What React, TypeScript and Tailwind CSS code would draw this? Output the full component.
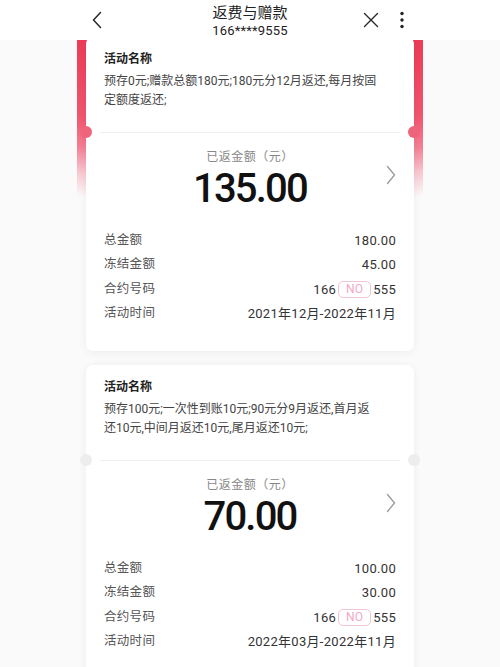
import React from "react";

const FONT = { fontFamily: 'Roboto, "Noto Sans CJK SC", "Noto Sans", sans-serif' };

type Card = {
  lines: string[];
  amount: string;
  total: string;
  frozen: string;
  time: string;
};

function Row({ label, children }: { label: string; children: React.ReactNode }) {
  return (
    <div className="flex items-center justify-between h-[24.5px]">
      <span className="text-[12.5px] text-[#555] tracking-[0.3px]">{label}</span>
      <span className="text-[13px] text-[#333] flex items-center tracking-[0.3px]">{children}</span>
    </div>
  );
}

function ChevronRight() {
  return (
    <svg width="10" height="20" viewBox="0 0 10 20" fill="none">
      <path d="M1.5 1.5 L8.5 10 L1.5 18.5" stroke="#9a9a9a" strokeWidth="1.3" strokeLinecap="round" strokeLinejoin="round" />
    </svg>
  );
}

function CardView({ c, highlight }: { c: Card; highlight: boolean }) {
  const notch = highlight ? "bg-[#f0647b]" : "bg-[#ededed]";
  return (
    <div
      className={
        "px-[9px] " +
        (highlight
          ? "bg-[linear-gradient(to_bottom,#ec3a55_0px,#f0566f_80px,#f37f93_110px,#f9c6d0_135px,rgba(250,250,250,0)_160px)]"
          : "")
      }
    >
      <div className="bg-white rounded-[7px] shadow-[0_1px_8px_rgba(0,0,0,0.06)]">
        <div className="px-[18px] pt-[13px] pb-[22px]">
          <div className="text-[12px] font-bold text-[#222] leading-[18px]">活动名称</div>
          <div className="mt-[4px] text-[12px] text-[#444] leading-[19px]">
            {c.lines.map((l, i) => (
              <div key={i} className="whitespace-nowrap">{l}</div>
            ))}
          </div>
        </div>
        <div className="relative h-px mx-[14px] bg-[#efefef]">
          <div className={"absolute left-[-20px] top-[-6px] w-[12px] h-[12px] rounded-full " + notch} />
          <div className={"absolute right-[-20px] top-[-6px] w-[12px] h-[12px] rounded-full " + notch} />
        </div>
        <div className="px-[18px] pt-[16px] pb-[25px]">
          <div className="grid grid-cols-[1fr_auto_1fr]">
            <div />
            <div className="flex flex-col items-center">
              <div className="text-[12px] text-[#888] leading-[16px] tracking-[0.5px]">已返金额（元）</div>
              <div className="text-[40px] font-medium text-[#111] leading-[44px] tracking-[-1.8px] mt-[2px]">{c.amount}</div>
            </div>
            <div className="flex justify-end pt-[16px]">
              <ChevronRight />
            </div>
          </div>
          <div className="mt-[17px]">
            <Row label="总金额">{c.total}</Row>
            <Row label="冻结金额">{c.frozen}</Row>
            <Row label="合约号码">
              166
              <span className="mx-[2px] inline-flex items-center justify-center w-[33px] h-[17px] rounded-[5px] border border-[#f3c3d6] text-[12px] text-[#f3a8c6]">
                NO
              </span>
              555
            </Row>
            <Row label="活动时间">{c.time}</Row>
          </div>
        </div>
      </div>
    </div>
  );
}

const cards: Card[] = [
  {
    lines: ["预存0元;赠款总额180元;180元分12月返还,每月按固", "定额度返还;"],
    amount: "135.00",
    total: "180.00",
    frozen: "45.00",
    time: "2021年12月-2022年11月",
  },
  {
    lines: ["预存100元;一次性到账10元;90元分9月返还,首月返", "还10元,中间月返还10元,尾月返还10元;"],
    amount: "70.00",
    total: "100.00",
    frozen: "30.00",
    time: "2022年03月-2022年11月",
  },
];

export default function App() {
  return (
    <div className="w-[500px] h-[667px] overflow-hidden bg-[#fafafa] flex flex-col" style={FONT}>
      <header className="relative z-10 h-[40px] shrink-0 bg-white grid grid-cols-[1fr_auto_1fr] items-center">
        <div className="pl-[91px] flex items-center">
          <svg width="12" height="18" viewBox="0 0 12 18" fill="none">
            <path d="M9.5 1.5 L2.5 9 L9.5 16.5" stroke="#2a2a2a" strokeWidth="1.5" strokeLinecap="round" strokeLinejoin="round" />
          </svg>
        </div>
        <div className="flex flex-col items-center self-start pt-[4px]">
          <div className="text-[15px] leading-[18px] text-[#222]">返费与赠款</div>
          <div className="text-[13px] leading-[16px] text-[#222] tracking-[0.2px] mt-[1px]">166****9555</div>
        </div>
        <div className="flex items-center justify-end pr-[96px] gap-[21px]">
          <svg width="16" height="16" viewBox="0 0 16 16" fill="none">
            <path d="M1.5 1.5 L14.5 14.5 M14.5 1.5 L1.5 14.5" stroke="#2a2a2a" strokeWidth="1.4" strokeLinecap="round" />
          </svg>
          <svg width="4" height="18" viewBox="0 0 4 18" fill="#222">
            <circle cx="2" cy="2.5" r="1.7" />
            <circle cx="2" cy="9" r="1.7" />
            <circle cx="2" cy="15.5" r="1.7" />
          </svg>
        </div>
      </header>
      <main className="flex-1 overflow-hidden">
        <div className="px-[77px] -mt-[3px] flex flex-col gap-[14px]">
          <CardView c={cards[0]} highlight />
          <CardView c={cards[1]} highlight={false} />
        </div>
      </main>
    </div>
  );
}
